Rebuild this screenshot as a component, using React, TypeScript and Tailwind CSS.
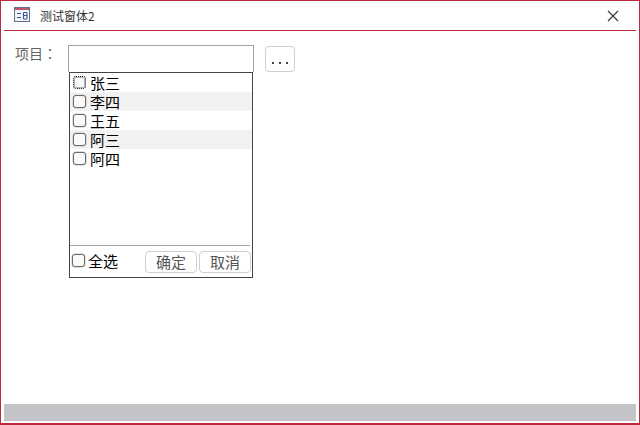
const font = { fontFamily: '"Noto Sans CJK SC", "Liberation Sans", sans-serif' };
const labelFont = { fontFamily: '"Noto Sans CJK TC", "Noto Sans CJK SC", sans-serif' };

function Check({ focused = false }: { focused?: boolean }) {
  return (
    <span
      className={
        "block w-[13px] h-[13px] rounded-[3px] bg-[#fafafa] border shrink-0 " +
        (focused
          ? "border-dotted border-[#111] shadow-[inset_0_0_0_1px_#b0b0b0]"
          : "border-[#6a6a6a] shadow-[0_0_0_0.5px_#c4c4c4]")
      }
    />
  );
}

const rows = ["张三", "李四", "王五", "阿三", "阿四"];

export default function App() {
  return (
    <div
      className="w-[640px] h-[425px] bg-white border border-[#b92b3c] border-b-2 flex flex-col px-[3px] pb-[2px] overflow-hidden"
      style={font}
    >
      <header className="h-[29px] flex items-center shrink-0">
        <svg width="17" height="16" viewBox="0 0 17 16" className="ml-[10px] mt-[-1px]">
          <rect x="0.5" y="0.5" width="15" height="14" fill="#f1f5fb" stroke="#5f6f8f" />
          <rect x="1" y="1" width="14" height="2" fill="#c4566a" />
          <path d="M3 6.5h4M3 10.5h4" stroke="#34558c" />
          <path d="M9.5 5.5h3.5v6.5h-3.5zM9.5 8.5h3.5" fill="none" stroke="#34558c" />
        </svg>
        <span className="ml-[9px] text-[12px] leading-none text-[#333]">测试窗体2</span>
        <svg width="12" height="12" viewBox="0 0 12 12" className="ml-auto mr-[17px]">
          <path d="M1 1l10 10M11 1L1 11" stroke="#333" strokeWidth="1.1" fill="none" />
        </svg>
      </header>
      <div className="h-px bg-[#b92b3c] shrink-0" />

      <main className="flex-1 flex pt-[14px] min-h-0">
        <span className="ml-[11px] w-[53px] text-[14px] leading-[16px] text-[#666]" style={labelFont}>
          项目：
        </span>
        <div className="w-[186px] flex flex-col">
          <div className="h-[27px] border border-b-0 border-[#a3a3a3] shrink-0" />
          <div className="ml-px w-[184px] h-[206px] border border-[#444] flex flex-col">
            <ul className="flex-1">
              {rows.map((r, i) => (
                <li
                  key={r}
                  className={
                    "h-[19px] flex items-center pl-[3px] gap-[4px] text-[15px] text-black " +
                    (i % 2 === 1 ? "bg-[#f2f2f2]" : "")
                  }
                >
                  <Check focused={i === 0} />
                  <span className="leading-none">{r}</span>
                </li>
              ))}
            </ul>
            <div className="h-px bg-[#a0a0a0] mr-[2px]" />
            <div className="h-[31px] flex items-start">
              <span className="mt-[8px] ml-[2px]">
                <Check />
              </span>
              <span className="ml-[3px] mt-[7px] text-[15px] leading-none text-black">全选</span>
              <button className="ml-[27px] mt-[5px] w-[52px] h-[22px] border border-[#cfcfcf] rounded-[4px] text-[15px] leading-none pb-[2px] text-[#555] bg-white">
                确定
              </button>
              <button className="ml-[2px] mt-[5px] w-[52px] h-[22px] border border-[#cfcfcf] rounded-[4px] text-[15px] leading-none pb-[2px] text-[#555] bg-white">
                取消
              </button>
            </div>
          </div>
        </div>
        <button className="ml-[11px] mt-px w-[30px] h-[26px] border border-[#cfcfcf] rounded-[4px] flex items-end justify-center gap-[5px] pb-[7px] bg-white">
          <span className="w-[2px] h-[2px] bg-[#444]" />
          <span className="w-[2px] h-[2px] bg-[#444]" />
          <span className="w-[2px] h-[2px] bg-[#444]" />
        </button>
      </main>

      <footer className="h-[17px] bg-[#c2c4c8] shrink-0" />
    </div>
  );
}
